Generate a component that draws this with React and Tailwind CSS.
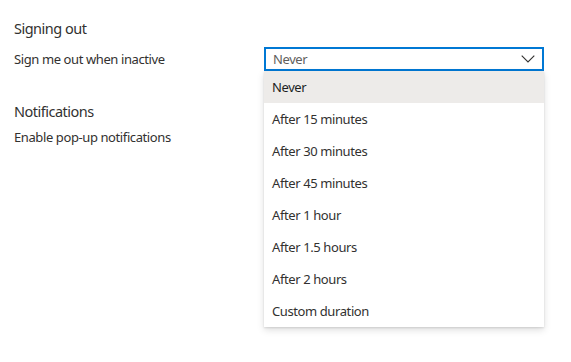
const options = [
	"Never",
	"After 15 minutes",
	"After 30 minutes",
	"After 45 minutes",
	"After 1 hour",
	"After 1.5 hours",
	"After 2 hours",
	"Custom duration"
];

const App = () => {
	return (
		<main className="min-h-screen bg-white pt-[18px] pl-[14px] text-[#323130] font-['Segoe_UI','Noto_Sans',sans-serif] tracking-[-0.4px]">
			<section>
				<h2 className="h-[20px] text-[14.5px] leading-[20px] tracking-[-0.5px]">Signing out</h2>
				<div className="mt-[9px] flex items-center h-[24px]">
					<span className="w-[250px] text-[13px] leading-[20px]">
						Sign me out when inactive
					</span>
					<div className="relative w-[280px] h-[24px]">
						<div className="flex h-full items-center justify-between border-2 border-[#0078d4] bg-white pl-[7px] pr-[6px]">
							<span className="text-[13px] leading-[20px] text-[#605e5c]">Never</span>
							<svg width="14" height="8" viewBox="0 0 14 8" fill="none" className="mr-[1px]">
								<path d="M0.7 0.7 L7 7 L13.3 0.7" stroke="#323130" strokeWidth="1.1" />
							</svg>
						</div>
						<ul className="absolute left-0 top-full z-10 w-full bg-white shadow-[0_3.2px_7.2px_rgba(0,0,0,0.132),0_0.6px_1.8px_rgba(0,0,0,0.108)]">
							{options.map((o, i) => (
								<li
									key={o}
									className={`flex h-[32px] items-center px-[8px] pt-[2px] text-[13px] ${
										i === 0 ? "bg-[#edebe9] text-[#201f1e]" : ""
									}`}>
									{o}
								</li>
							))}
						</ul>
					</div>
				</div>
			</section>
			<section className="mt-[30px]">
				<h2 className="h-[20px] text-[14.5px] leading-[20px] tracking-[-0.5px]">Notifications</h2>
				<p className="mt-[6px] h-[20px] text-[13px] leading-[20px]">
					Enable pop-up notifications
				</p>
			</section>
		</main>
	);
};

export default App;
